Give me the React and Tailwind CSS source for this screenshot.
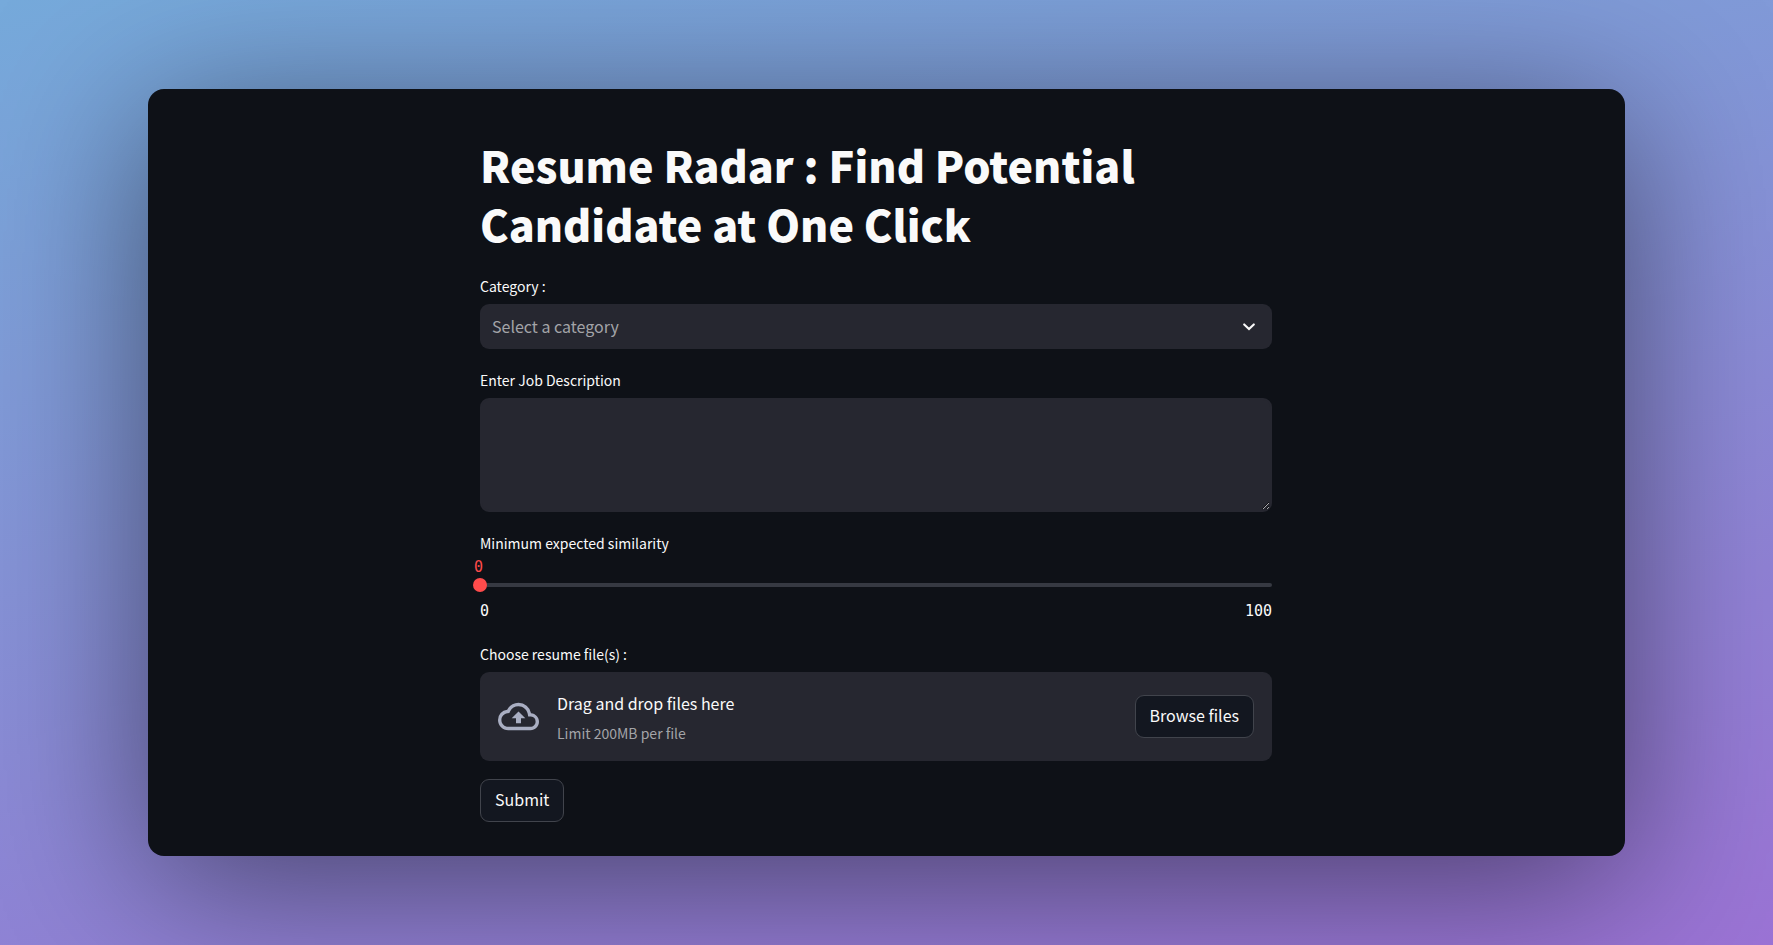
import { useState } from "react";

const LABEL = "mb-[5px] block text-[14px] leading-[26px] text-[#fafafa]";
const BUTTON =
  "h-[43px] rounded-[9px] border border-[#41444c] bg-[#131720] px-[14px] pb-[3px] text-[16px] leading-6 text-[#fafafa]";

function ChevronDown() {
  return (
    <svg
      viewBox="0 0 12 8"
      className="pointer-events-none mr-[17px] h-2 w-3 self-center justify-self-end [grid-area:1/1]"
      fill="none"
      stroke="#fafafa"
      strokeWidth="2.1"
      aria-hidden="true"
    >
      <path d="M1.2 1.4 6 6.1 10.8 1.4" strokeLinecap="round" strokeLinejoin="miter" />
    </svg>
  );
}

function CloudUpload() {
  return (
    <svg viewBox="0 0 24 24" className="h-[41px] w-[41px] shrink-0" fill="#a9aec2" aria-hidden="true">
      <path d="M19.35 10.04A7.49 7.49 0 0012 4C9.11 4 6.6 5.64 5.35 8.04A5.994 5.994 0 000 14c0 3.31 2.69 6 6 6h13c2.76 0 5-2.24 5-5 0-2.64-2.05-4.78-4.65-4.96zM19 18H6c-2.21 0-4-1.79-4-4 0-2.05 1.53-3.76 3.56-3.97l1.07-.11.5-.95A5.469 5.469 0 0112 6c2.62 0 4.88 1.86 5.39 4.43l.3 1.5 1.53.11A2.98 2.98 0 0122 15c0 1.65-1.35 3-3 3zM8 13h2.55v3h2.9v-3H16l-4-4z" />
    </svg>
  );
}

export default function App() {
  const [similarity, setSimilarity] = useState(0);

  return (
    <div className="flex min-h-screen items-center justify-center overflow-hidden bg-[linear-gradient(167deg,#76aadb_0%,#809bd8_28%,#9082d5_72%,#9b73d5_100%)] font-['Noto_Sans_CJK_SC',sans-serif]">
      <main className="w-5/6 rounded-2xl bg-[#0e1117] pt-[46px] pr-[21px] pb-[34px] shadow-[0_28px_160px_rgba(0,0,0,0.5)]">
        <form className="mx-auto flex max-w-[792px] flex-col gap-[18px]" onSubmit={(e) => e.preventDefault()}>
          <h1 className="mb-0.5 text-[43px] leading-[59px] font-black text-[#fafafa]">
            Resume Radar : Find Potential Candidate at One Click
          </h1>

          <div>
            <label htmlFor="category" className={LABEL}>
              Category :
            </label>
            <div className="grid">
              <select
                id="category"
                defaultValue=""
                className="h-[45px] w-full appearance-none rounded-[9px] bg-[#262730] px-3 pb-0.5 text-[16px] text-[#a3a4a8] [grid-area:1/1]"
              >
                <option value="">Select a category</option>
              </select>
              <ChevronDown />
            </div>
          </div>

          <div>
            <label htmlFor="description" className={LABEL}>
              Enter Job Description
            </label>
            <textarea
              id="description"
              className="block h-[114px] w-full resize-y rounded-[9px] border-2 border-[#262730] bg-[#262730] p-3 text-[16px] text-[#fafafa]"
            />
          </div>

          <div>
            <label htmlFor="similarity" className="block text-[14px] leading-[26px] text-[#fafafa]">
              Minimum expected similarity
            </label>
            <output
              htmlFor="similarity"
              className="-ml-1.5 block font-['DejaVu_Sans_Mono',monospace] text-[15px] leading-[22px] text-[#ff4b4b]"
            >
              {similarity}
            </output>
            <div className="grid h-[14px] items-center">
              <div className="h-1 rounded-full bg-[#363942] [grid-area:1/1]" />
              <input
                id="similarity"
                type="range"
                min="0"
                max="100"
                value={similarity}
                onChange={(e) => setSimilarity(Number(e.target.value))}
                className="-mx-[7px] h-[14px] appearance-none bg-transparent [grid-area:1/1] [&::-webkit-slider-thumb]:h-[14px] [&::-webkit-slider-thumb]:w-[14px] [&::-webkit-slider-thumb]:appearance-none [&::-webkit-slider-thumb]:rounded-full [&::-webkit-slider-thumb]:bg-[#ff4b4b]"
              />
            </div>
            <div className="flex justify-between pt-2 pb-px font-['DejaVu_Sans_Mono',monospace] text-[15px] leading-[22px] text-[#fafafa]">
              <span>0</span>
              <span>100</span>
            </div>
          </div>

          <div>
            <label htmlFor="files" className={LABEL}>
              Choose resume file(s) :
            </label>
            <section className="flex items-center gap-[18px] rounded-[9px] bg-[#262730] px-[18px] py-4">
              <CloudUpload />
              <div className="flex flex-1 flex-col gap-[5px] pt-0.5">
                <span className="text-[16px] leading-[26px] text-[#fafafa]">Drag and drop files here</span>
                <span className="text-[14px] leading-6 text-[#a3a4a8]">Limit 200MB per file</span>
              </div>
              <input id="files" type="file" multiple className="hidden" />
              <button type="button" className={BUTTON} onClick={() => document.getElementById("files").click()}>
                Browse files
              </button>
            </section>
          </div>

          <button type="submit" className={`${BUTTON} self-start`}>
            Submit
          </button>
        </form>
      </main>
    </div>
  );
}
